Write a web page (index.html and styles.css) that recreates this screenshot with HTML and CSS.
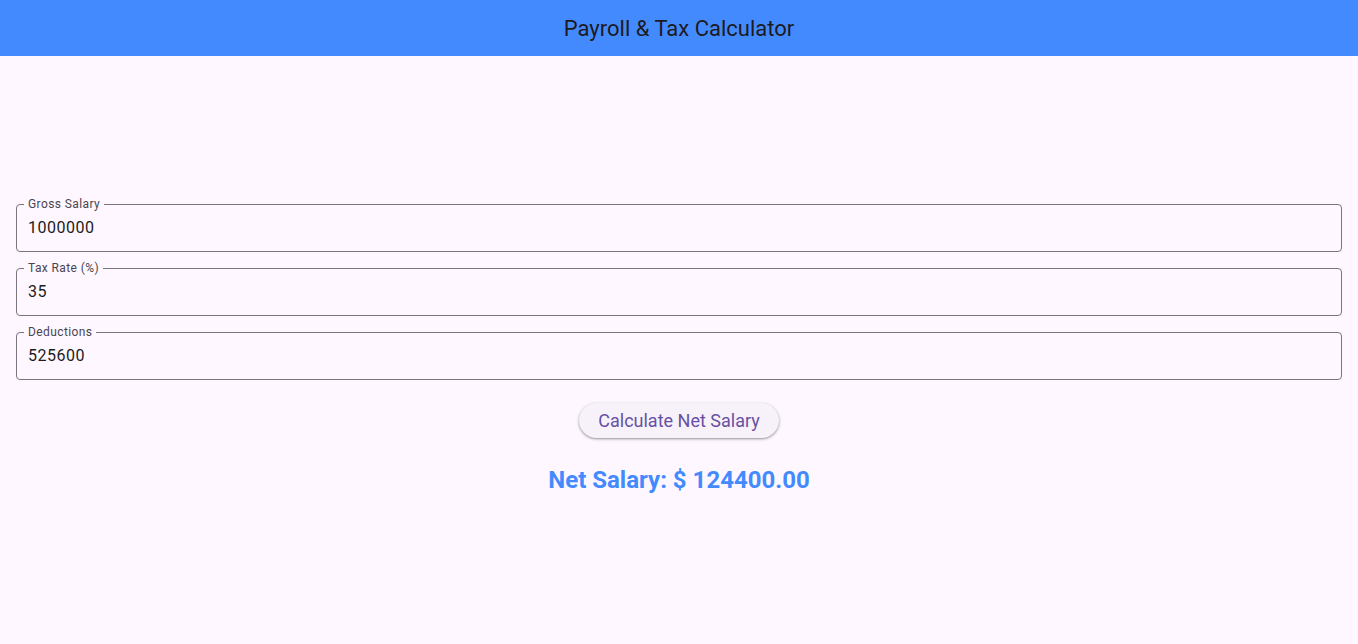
FILE: index.html
```html
<!DOCTYPE html>
<html>
<head>
<meta charset="utf-8">
<link rel="stylesheet" href="styles.css">
</head>
<body>
<header class="appbar">Payroll &amp; Tax Calculator</header>
<main class="content">
  <div class="field">
    <span class="label">Gross Salary</span>
    <span class="value">1000000</span>
  </div>
  <div class="field">
    <span class="label">Tax Rate (%)</span>
    <span class="value">35</span>
  </div>
  <div class="field">
    <span class="label">Deductions</span>
    <span class="value">525600</span>
  </div>
  <div class="btn-wrap">
    <button class="btn">Calculate Net Salary</button>
  </div>
  <div class="result">Net Salary: $ 124400.00</div>
</main>
</body>
</html>
```
FILE: styles.css
```css
html, body {
  margin: 0;
  padding: 0;
  height: 100%;
}
body {
  background: #fef7ff;
  font-family: Roboto, "Noto Sans", sans-serif;
  color: #1d1b20;
  display: flex;
  flex-direction: column;
}
.appbar {
  height: 56px;
  flex: 0 0 56px;
  background: #448aff;
  display: flex;
  align-items: center;
  justify-content: center;
  font-size: 22px;
  color: #1d1b20;
}
.content {
  flex: 1;
  display: flex;
  flex-direction: column;
  justify-content: center;
  padding: 0 16px 3px;
  gap: 16px;
}
.field {
  position: relative;
  height: 46px;
  border: 1px solid #79747e;
  border-radius: 4px;
  display: flex;
  align-items: center;
  padding: 0 11px 1px;
  box-sizing: content-box;
}
.field {
  height: 45px;
}
.label {
  position: absolute;
  left: 7px;
  top: -8px;
  padding: 0 4px;
  background: #fef7ff;
  font-size: 12px;
  line-height: 14px;
  letter-spacing: 0.4px;
  color: #49454f;
}
.value {
  font-size: 16px;
  letter-spacing: 0.5px;
  color: #1d1b20;
}
.btn-wrap {
  display: flex;
  justify-content: center;
  margin-top: 7px;
}
.btn {
  font-family: Roboto, "Noto Sans", sans-serif;
  height: 35px;
  padding: 1px 19px 0;
  border: none;
  border-radius: 18px;
  background: #f7f2fa;
  color: #6750a4;
  font-size: 18px;
  box-shadow: 0 1px 2px rgba(0,0,0,0.3), 0 1px 3px 1px rgba(0,0,0,0.1);
}
.result {
  text-align: center;
  font-size: 24px;
  line-height: 28px;
  font-weight: bold;
  color: #448aff;
  margin-top: 12px;
}
```
